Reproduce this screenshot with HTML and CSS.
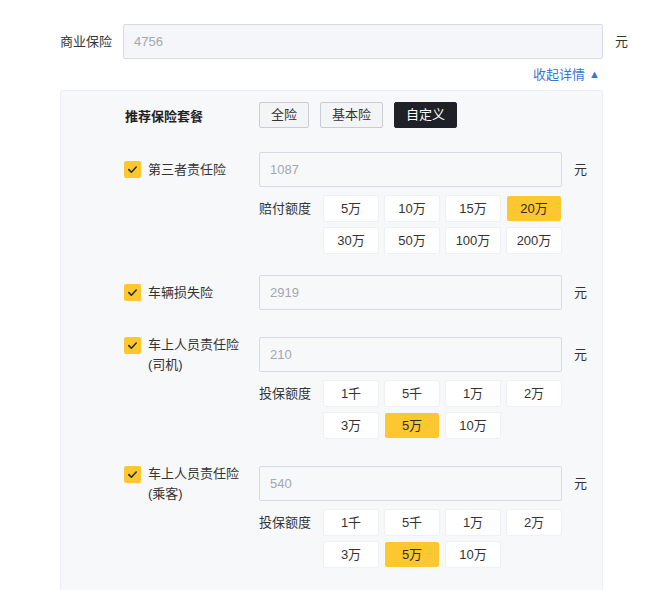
FILE: index.html
```html
<!DOCTYPE html>
<html lang="zh-CN">
<head>
<meta charset="utf-8">
<title>商业保险</title>
<link rel="stylesheet" href="styles.css">
</head>
<body>
<div class="page">
  <div class="main-row">
    <span class="main-label">商业保险</span>
    <div class="input main-input">4756</div>
    <span class="unit">元</span>
  </div>
  <div class="toggle-row">
    <span class="toggle">收起详情<span class="tri">▲</span></span>
  </div>
  <div class="panel">
    <div class="pkg-row">
      <div class="pkg-title">推荐保险套餐</div>
      <div class="pkg-btns">
        <span class="pkg-btn">全险</span>
        <span class="pkg-btn">基本险</span>
        <span class="pkg-btn active">自定义</span>
      </div>
    </div>

    <div class="item item-first">
      <div class="item-label">
        <span class="check"><svg viewBox="0 0 17 17" width="17" height="17"><polyline points="4.8,8.6 7.4,11.2 12.2,6" fill="none" stroke="#2a2a2a" stroke-width="1.6" stroke-linecap="round" stroke-linejoin="round"/></svg></span>
        <span class="label-text">第三者责任险</span>
      </div>
      <div class="item-body">
        <div class="field-row">
          <div class="input field">1087</div>
          <span class="unit">元</span>
        </div>
        <div class="opt-row">
          <span class="opt-label">赔付额度</span>
          <div class="opts">
            <span class="opt">5万</span>
            <span class="opt">10万</span>
            <span class="opt">15万</span>
            <span class="opt on">20万</span>
            <span class="opt">30万</span>
            <span class="opt">50万</span>
            <span class="opt">100万</span>
            <span class="opt">200万</span>
          </div>
        </div>
      </div>
    </div>

    <div class="item item-tight">
      <div class="item-label">
        <span class="check"><svg viewBox="0 0 17 17" width="17" height="17"><polyline points="4.8,8.6 7.4,11.2 12.2,6" fill="none" stroke="#2a2a2a" stroke-width="1.6" stroke-linecap="round" stroke-linejoin="round"/></svg></span>
        <span class="label-text">车辆损失险</span>
      </div>
      <div class="item-body">
        <div class="field-row">
          <div class="input field">2919</div>
          <span class="unit">元</span>
        </div>
      </div>
    </div>

    <div class="item">
      <div class="item-label multi">
        <span class="check"><svg viewBox="0 0 17 17" width="17" height="17"><polyline points="4.8,8.6 7.4,11.2 12.2,6" fill="none" stroke="#2a2a2a" stroke-width="1.6" stroke-linecap="round" stroke-linejoin="round"/></svg></span>
        <span class="label-text">车上人员责任险<br>(司机)</span>
      </div>
      <div class="item-body">
        <div class="field-row">
          <div class="input field">210</div>
          <span class="unit">元</span>
        </div>
        <div class="opt-row">
          <span class="opt-label">投保额度</span>
          <div class="opts">
            <span class="opt">1千</span>
            <span class="opt">5千</span>
            <span class="opt">1万</span>
            <span class="opt">2万</span>
            <span class="opt">3万</span>
            <span class="opt on">5万</span>
            <span class="opt">10万</span>
          </div>
        </div>
      </div>
    </div>

    <div class="item item-loose">
      <div class="item-label multi">
        <span class="check"><svg viewBox="0 0 17 17" width="17" height="17"><polyline points="4.8,8.6 7.4,11.2 12.2,6" fill="none" stroke="#2a2a2a" stroke-width="1.6" stroke-linecap="round" stroke-linejoin="round"/></svg></span>
        <span class="label-text">车上人员责任险<br>(乘客)</span>
      </div>
      <div class="item-body">
        <div class="field-row">
          <div class="input field">540</div>
          <span class="unit">元</span>
        </div>
        <div class="opt-row">
          <span class="opt-label">投保额度</span>
          <div class="opts">
            <span class="opt">1千</span>
            <span class="opt">5千</span>
            <span class="opt">1万</span>
            <span class="opt">2万</span>
            <span class="opt">3万</span>
            <span class="opt on">5万</span>
            <span class="opt">10万</span>
          </div>
        </div>
      </div>
    </div>
  </div>
</div>
</body>
</html>
```

FILE: styles.css
```css
* { box-sizing: border-box; }
html, body {
  margin: 0;
  padding: 0;
  background: #ffffff;
}
body {
  font-family: "Liberation Sans", "Noto Sans CJK SC", sans-serif;
  font-size: 13px;
  color: #333333;
  height: 590px;
  overflow: hidden;
}
.page {
  padding: 24px 0 0 60px;
  width: 640px;
}
.main-row {
  display: flex;
  align-items: center;
}
.main-label {
  width: 63px;
  line-height: 20px;
  color: #333;
}
.input {
  height: 35px;
  line-height: 33px;
  border: 1px solid #d8dbe1;
  border-radius: 2px;
  background: #f5f6f9;
  color: #a4a7ad;
  padding: 0 10px;
}
.main-input {
  width: 480px;
}
.unit {
  margin-left: 12px;
  color: #333;
  line-height: 20px;
}
.toggle-row {
  width: 543px;
  height: 31px;
  text-align: right;
  padding-right: 3px;
}
.toggle {
  color: #3b74d6;
  line-height: 31px;
}
.tri {
  font-size: 11px;
  margin-left: 4px;
  position: relative;
  top: -1px;
}
.panel {
  width: 543px;
  height: 520px;
  background: #f7f8fa;
  border: 1px solid #eceef1;
  border-radius: 2px;
  padding: 11px 0 0 63px;
  display: flex;
  flex-direction: column;
  gap: 27px;
}
.pkg-row {
  display: flex;
  align-items: center;
}
.item-first {
  margin-top: -3px;
}
.pkg-title {
  width: 135px;
  padding-left: 1px;
  font-weight: bold;
  color: #222;
}
.pkg-btns {
  display: flex;
  gap: 11px;
}
.pkg-btn {
  height: 26px;
  line-height: 24px;
  padding: 0 11px;
  border: 1px solid #c9ccd2;
  border-radius: 2px;
  background: #f3f4f6;
  color: #333;
}
.pkg-btn.active {
  background: #1e2228;
  border-color: #1e2228;
  color: #ffffff;
}
.item {
  display: flex;
  align-items: flex-start;
}
.item-tight {
  margin-top: -5px;
}
.item-loose {
  margin-top: 1px;
}
.item-label {
  width: 135px;
  min-height: 35px;
  display: flex;
  align-items: center;
}
.item-label.multi {
  align-items: flex-start;
}
.item-label.multi .label-text {
  margin-top: -2px;
}
.check {
  width: 17px;
  height: 17px;
  border-radius: 2px;
  background: #fcc72f;
  display: flex;
  flex: none;
  margin-right: 7px;
}
.label-text {
  line-height: 20px;
  color: #333;
}
.item-body {
  display: flex;
  flex-direction: column;
  gap: 9px;
}
.field-row {
  display: flex;
  align-items: center;
}
.field {
  width: 303px;
  background: #f7f8fa;
}
.opt-row {
  display: flex;
  align-items: flex-start;
}
.opt-label {
  width: 65px;
  line-height: 25px;
  color: #333;
}
.opts {
  width: 238px;
  display: flex;
  flex-wrap: wrap;
  gap: 7px;
}
.opt {
  width: 54px;
  height: 25px;
  line-height: 25px;
  text-align: center;
  background: #ffffff;
  border-radius: 2px;
  color: #333;
  box-shadow: 0 0 0 1px #eef0f3;
}
.opt.on {
  background: #fcc72f;
  box-shadow: none;
  color: #2a2a2a;
}
```
